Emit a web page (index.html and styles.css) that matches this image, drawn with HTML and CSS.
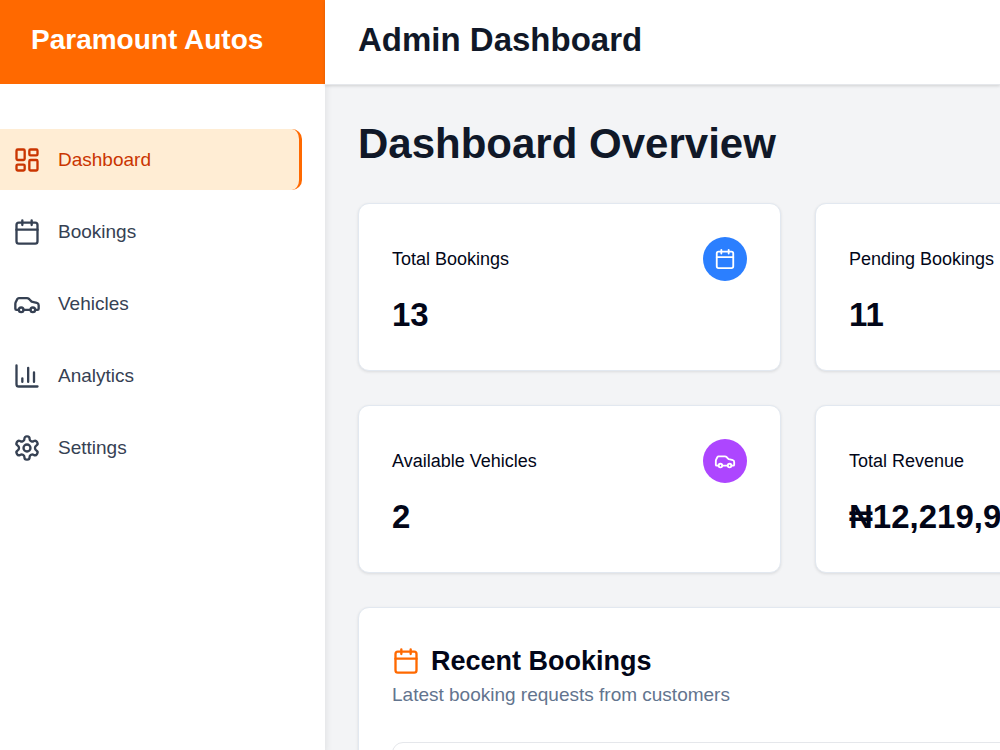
FILE: index.html
```html
<!DOCTYPE html>
<html lang="en">
<head>
    <meta charset="UTF-8">
    <meta name="viewport" content="width=device-width, initial-scale=1.0">
    <title>Admin Dashboard</title>
    <link rel="stylesheet" href="styles.css">
</head>
<body>
    <!-- shared icons -->
    <svg class="icon-defs" aria-hidden="true">
        <symbol id="icon-dashboard" viewBox="0 0 24 24">
            <rect width="7" height="9" x="3" y="3" rx="1"/>
            <rect width="7" height="5" x="14" y="3" rx="1"/>
            <rect width="7" height="9" x="14" y="12" rx="1"/>
            <rect width="7" height="5" x="3" y="16" rx="1"/>
        </symbol>
        <symbol id="icon-calendar" viewBox="0 0 24 24">
            <path d="M8 2v4M16 2v4M3 10h18"/>
            <rect width="18" height="18" x="3" y="4" rx="2"/>
        </symbol>
        <symbol id="icon-car" viewBox="0 0 24 24">
            <path d="M19 17h2c.6 0 1-.4 1-1v-3c0-.9-.7-1.7-1.5-1.9C18.7 10.6 16 10 16 10s-1.3-1.4-2.2-2.3c-.5-.4-1.1-.7-1.8-.7H5c-.6 0-1.1.4-1.4.9l-1.4 2.9A3.7 3.7 0 0 0 2 12v4c0 .6.4 1 1 1h2"/>
            <circle cx="7" cy="17" r="2"/>
            <path d="M9 17h6"/>
            <circle cx="17" cy="17" r="2"/>
        </symbol>
        <symbol id="icon-chart" viewBox="0 0 24 24">
            <path d="M3 3v16a2 2 0 0 0 2 2h16M18 17V9M13 17V5M8 17v-3"/>
        </symbol>
        <symbol id="icon-settings" viewBox="0 0 24 24">
            <path d="M12.22 2h-.44a2 2 0 0 0-2 2v.18a2 2 0 0 1-1 1.73l-.43.25a2 2 0 0 1-2 0l-.15-.08a2 2 0 0 0-2.73.73l-.22.38a2 2 0 0 0 .73 2.73l.15.1a2 2 0 0 1 1 1.72v.51a2 2 0 0 1-1 1.74l-.15.09a2 2 0 0 0-.73 2.73l.22.38a2 2 0 0 0 2.73.73l.15-.08a2 2 0 0 1 2 0l.43.25a2 2 0 0 1 1 1.73V20a2 2 0 0 0 2 2h.44a2 2 0 0 0 2-2v-.18a2 2 0 0 1 1-1.73l.43-.25a2 2 0 0 1 2 0l.15.08a2 2 0 0 0 2.73-.73l.22-.39a2 2 0 0 0-.73-2.73l-.15-.08a2 2 0 0 1-1-1.74v-.5a2 2 0 0 1 1-1.74l.15-.09a2 2 0 0 0 .73-2.73l-.22-.38a2 2 0 0 0-2.73-.73l-.15.08a2 2 0 0 1-2 0l-.43-.25a2 2 0 0 1-1-1.73V4a2 2 0 0 0-2-2z"/>
            <circle cx="12" cy="12" r="3"/>
        </symbol>
    </svg>

    <div class="layout">
        <aside class="sidebar">
            <div class="brand">Paramount Autos</div>
            <nav class="nav">
                <a href="#" class="nav-item active"><svg class="icon"><use href="#icon-dashboard"/></svg>Dashboard</a>
                <a href="#" class="nav-item"><svg class="icon"><use href="#icon-calendar"/></svg>Bookings</a>
                <a href="#" class="nav-item"><svg class="icon"><use href="#icon-car"/></svg>Vehicles</a>
                <a href="#" class="nav-item"><svg class="icon"><use href="#icon-chart"/></svg>Analytics</a>
                <a href="#" class="nav-item"><svg class="icon"><use href="#icon-settings"/></svg>Settings</a>
            </nav>
        </aside>

        <div class="page">
            <header class="topbar">
                <h1>Admin Dashboard</h1>
            </header>
            <main class="content">
                <h2 class="page-title">Dashboard Overview</h2>

                <div class="stats">
                    <div class="card">
                        <div class="card-head">
                            <span>Total Bookings</span>
                            <span class="badge blue"><svg class="icon"><use href="#icon-calendar"/></svg></span>
                        </div>
                        <div class="value">13</div>
                    </div>
                    <div class="card">
                        <div class="card-head">
                            <span>Pending Bookings</span>
                        </div>
                        <div class="value">11</div>
                    </div>
                    <div class="card">
                        <div class="card-head">
                            <span>Available Vehicles</span>
                            <span class="badge purple"><svg class="icon"><use href="#icon-car"/></svg></span>
                        </div>
                        <div class="value">2</div>
                    </div>
                    <div class="card">
                        <div class="card-head">
                            <span>Total Revenue</span>
                        </div>
                        <div class="value">₦12,219,9</div>
                    </div>
                </div>

                <section class="card recent">
                    <h3><svg class="icon"><use href="#icon-calendar"/></svg>Recent Bookings</h3>
                    <p>Latest booking requests from customers</p>
                    <div class="booking"></div>
                </section>
            </main>
        </div>
    </div>
</body>
</html>
```
FILE: styles.css
```css
* {
    box-sizing: border-box;
}

body {
    margin: 0;
    font-family: "Liberation Sans", Arial, sans-serif;
    font-size: 19px;
    line-height: 28px;
    color: #020618;
    background-color: #f3f4f6;
}

h1, h2, h3, p {
    margin: 0;
}

.icon-defs {
    position: absolute;
    width: 0;
    height: 0;
}

.icon {
    flex: none;
    width: 28px;
    height: 28px;
    fill: none;
    stroke: currentColor;
    stroke-width: 2;
    stroke-linecap: round;
    stroke-linejoin: round;
}

.layout {
    display: flex;
    height: 100vh;
    overflow: hidden;
}

/* sidebar */
.sidebar {
    flex: none;
    width: 325px;
    background-color: #fff;
    box-shadow: 0 4px 8px rgba(0, 0, 0, 0.1);
}

.brand {
    padding: 20px 31px 24px;
    background-color: #ff6900;
    color: #fff;
    font-size: 28px;
    line-height: 40px;
    font-weight: bold;
}

.nav {
    display: flex;
    flex-direction: column;
    gap: 11px;
    padding: 45px 23px 0 0;
}

.nav-item {
    display: flex;
    align-items: center;
    gap: 17px;
    height: 61px;
    padding-left: 13px;
    color: #364153;
    text-decoration: none;
}

.nav-item:hover {
    background-color: #fff7ed;
}

.nav-item.active {
    background-color: #ffedd4;
    color: #ca3500;
    border-right: 3px solid #ff6900;
    border-radius: 0 10px 10px 0;
}

/* main area */
.page {
    flex: 1;
    min-width: 0;
}

.topbar {
    padding: 17px 33px 22px;
    background-color: #fff;
    border-bottom: 1px solid #e5e7eb;
    box-shadow: 0 1px 3px rgba(0, 0, 0, 0.15);
}

.topbar h1 {
    color: #101828;
    font-size: 33px;
    line-height: 45px;
}

.content {
    display: flex;
    flex-direction: column;
    gap: 34px;
    min-width: 946px;
    padding: 34px 33px;
}

.page-title {
    color: #101828;
    font-size: 42px;
    line-height: 50px;
}

.stats {
    display: grid;
    grid-template-columns: 1fr 1fr;
    gap: 34px;
}

.card {
    padding: 33px;
    background-color: #fff;
    border: 1px solid #e2e8f0;
    border-radius: 11px;
    box-shadow: 0 1px 3px rgba(0, 0, 0, 0.1);
}

.card-head {
    display: flex;
    align-items: center;
    justify-content: space-between;
    height: 44px;
    margin-bottom: 11px;
    font-size: 18px;
}

.badge {
    display: flex;
    align-items: center;
    justify-content: center;
    width: 44px;
    height: 44px;
    border-radius: 50%;
    color: #fff;
}

.badge .icon {
    width: 22px;
    height: 22px;
}

.blue {
    background-color: #2b7fff;
}

.purple {
    background-color: #ad46ff;
}

.value {
    font-size: 33px;
    line-height: 45px;
    font-weight: bold;
}

.recent h3 {
    display: flex;
    align-items: center;
    gap: 11px;
    font-size: 27px;
    line-height: 40px;
}

.recent h3 .icon {
    color: #ff6900;
}

.recent p {
    color: #62748e;
}

.booking {
    height: 112px;
    margin-top: 33px;
    border: 1px solid #e5e7eb;
    border-radius: 11px;
}
```
